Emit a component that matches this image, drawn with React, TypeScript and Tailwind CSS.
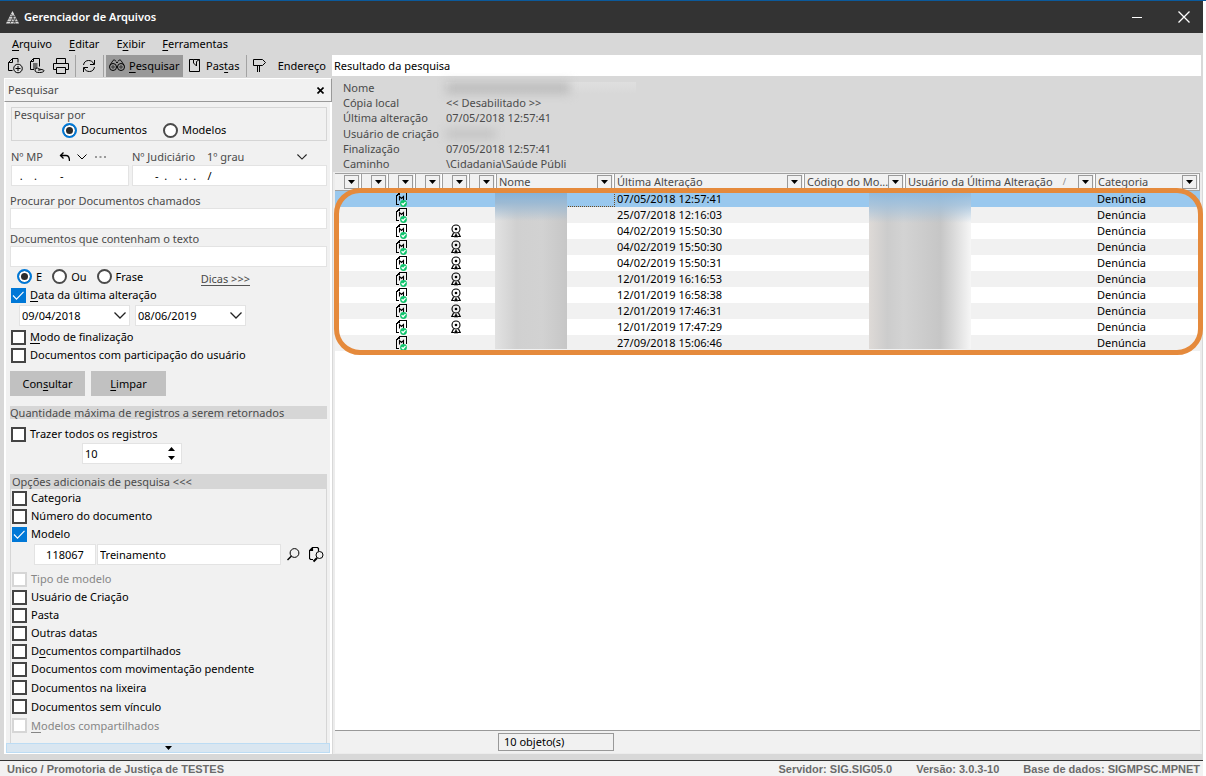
import type { ReactNode } from 'react';

type Option = { id: string; label: string; hotkey?: number; checked?: boolean; disabled?: boolean };

const menus = [
    { label: 'Arquivo', hotkey: 0 },
    { label: 'Editar', hotkey: 0 },
    { label: 'Exibir', hotkey: 1 },
    { label: 'Ferramentas', hotkey: 0 },
];

const details = [
    { label: 'Nome', value: '', hidden: 'name' },
    { label: 'Cópia local', value: '<< Desabilitado >>' },
    { label: 'Última alteração', value: '07/05/2018 12:57:41' },
    { label: 'Usuário de criação', value: '', hidden: 'user' },
    { label: 'Finalização', value: '07/05/2018 12:57:41' },
    { label: 'Caminho', value: '\\Cidadania\\Saúde Públi' },
];

const mainOptions: Option[] = [
    { id: 'categoria', label: 'Categoria' },
    { id: 'numero', label: 'Número do documento' },
    { id: 'modelo', label: 'Modelo', checked: true },
];

const extraOptions: Option[] = [
    { id: 'tipo', label: 'Tipo de modelo', disabled: true },
    { id: 'usuario', label: 'Usuário de Criação' },
    { id: 'pasta', label: 'Pasta' },
    { id: 'datas', label: 'Outras datas' },
    { id: 'compartilhados', label: 'Documentos compartilhados', hotkey: 1 },
    { id: 'movimentacao', label: 'Documentos com movimentação pendente' },
];

const lastOptions: Option[] = [
    { id: 'lixeira', label: 'Documentos na lixeira' },
    { id: 'vinculo', label: 'Documentos sem vínculo' },
    { id: 'modelos-comp', label: 'Modelos compartilhados', hotkey: 0, disabled: true },
];

const rows = [
    { date: '07/05/2018 12:57:41', signed: false },
    { date: '25/07/2018 12:16:03', signed: false },
    { date: '04/02/2019 15:50:30', signed: true },
    { date: '04/02/2019 15:50:30', signed: true },
    { date: '04/02/2019 15:50:31', signed: true },
    { date: '12/01/2019 16:16:53', signed: true },
    { date: '12/01/2019 16:58:38', signed: true },
    { date: '12/01/2019 17:46:31', signed: true },
    { date: '12/01/2019 17:47:29', signed: true },
    { date: '27/09/2018 15:06:46', signed: false },
];

const columns = ['', '', '', '', '', '', 'Nome', 'Última Alteração', 'Código do Mo...', 'Usuário da Última Alteração', 'Categoria'];

const field = 'h-[21px] min-w-0 border border-[#e3e3e3] bg-white px-1 text-black outline-none';

function rowColor(i: number) {
    if (i === 0) return 'bg-[#99c8ee]';
    return i % 2 ? 'bg-[#f1f1f1]' : 'bg-white';
}

function Hotkey({ text, at }: { text: string; at?: number }) {
    if (at === undefined) return <>{text}</>;
    return (
        <span>
            {text.slice(0, at)}
            <u className="underline-offset-2">{text[at]}</u>
            {text.slice(at + 1)}
        </span>
    );
}

function Icon({ w, h, children }: { w: number; h: number; children: ReactNode }) {
    return (
        <svg width={w} height={h} viewBox={`0 0 ${w} ${h}`} fill="none" stroke="currentColor" className="shrink-0" aria-hidden="true">
            {children}
        </svg>
    );
}

function Chevron({ w }: { w: number }) {
    return (
        <svg width={w} height={w / 2 + 1} viewBox="0 0 12 7" fill="none" stroke="#222" strokeWidth="1.3" className="pointer-events-none col-start-1 row-start-1 mr-1 self-center justify-self-end" aria-hidden="true">
            <path d="M.5.5 6 6 11.5.5" />
        </svg>
    );
}

function Triangle({ up }: { up?: boolean }) {
    return (
        <svg width="7" height="4" viewBox="0 0 7 4" aria-hidden="true">
            <path d={up ? 'M0 4h7L3.5 0z' : 'M0 0h7L3.5 4z'} fill="#000" />
        </svg>
    );
}

function Check({ option, className = 'h-[18px]' }: { option: Option; className?: string }) {
    return (
        <label htmlFor={option.id} className={`flex items-center gap-1 ${option.disabled ? 'text-[#868686]' : 'text-black'} ${className}`}>
            <span className="grid">
                <input
                    id={option.id}
                    type="checkbox"
                    defaultChecked={option.checked}
                    disabled={option.disabled}
                    className="peer col-start-1 row-start-1 size-[15px] appearance-none border-2 border-[#444] bg-white checked:border-[#0078d7] checked:bg-[#0078d7] disabled:border-[#d6d6d6]"
                />
                <svg viewBox="0 0 15 15" className="pointer-events-none invisible col-start-1 row-start-1 size-[15px] peer-checked:visible" fill="none" stroke="#fff" strokeWidth="1.1">
                    <path d="m2 7.5 3.5 3.7 7-7.4" />
                </svg>
            </span>
            <Hotkey text={option.label} at={option.hotkey} />
        </label>
    );
}

function Radio({ name, label, checked }: { name: string; label: string; checked?: boolean }) {
    return (
        <label className="flex items-center gap-1 text-black">
            <input
                type="radio"
                name={name}
                defaultChecked={checked}
                className="size-[15px] appearance-none rounded-full border-2 border-[#4a4a4a] bg-white checked:border-[#0078d7] checked:bg-[#2b2b2b] checked:shadow-[inset_0_0_0_2px_#fff]"
            />
            {label}
        </label>
    );
}

function DateSelect({ label, value }: { label: string; value: string }) {
    return (
        <span className="grid w-[111px]">
            <select aria-label={label} className={`col-start-1 row-start-1 appearance-none ${field} px-[2px]`}>
                <option>{value}</option>
            </select>
            <Chevron w={12} />
        </span>
    );
}

function Separator() {
    return <span className="h-[22px] w-px bg-[#a3a3a3]" />;
}

function TitleBar() {
    return (
        <header className="flex h-8 items-center gap-[5px] bg-[#333] pl-[6px] text-white">
            <svg width="13" height="13" viewBox="0 0 13 13" aria-hidden="true">
                <path d="M6.5 0 13 12.5H0z" fill="#ddd" />
                <path d="M3.6 5.6h6M2.2 8h9M1 10.4h11M8.6 3 4 12.5M10.5 6 7.5 12.5M5.5 3 9.5 12.5" stroke="#333" strokeWidth=".7" />
            </svg>
            <h1 className="flex-1 text-[11px] font-semibold">Gerenciador de Arquivos</h1>
            <button type="button" aria-label="Minimizar" className="flex h-8 w-[46px] items-center justify-center">
                <Icon w={10} h={2}><path d="M0 1.5h10" strokeWidth="1" shapeRendering="crispEdges" /></Icon>
            </button>
            <button type="button" aria-label="Fechar" className="flex h-8 w-[38px] items-center justify-center">
                <Icon w={12} h={12}><path d="m.5.5 11 11m0-11-11 11" strokeWidth="1.3" /></Icon>
            </button>
        </header>
    );
}

function Toolbar() {
    return (
        <div className="flex h-[23px] items-center pr-[2px] text-black">
            <div className="flex w-[332px] shrink-0 items-center pl-2">
                <button type="button" aria-label="Novo">
                    <Icon w={15} h={16}>
                        <path d="M4.5 12.500h-4v-8l4-4h5.500v4M.5 4.500h4v-4" />
                        <circle cx="10" cy="10.500" r="4.300" />
                        <path d="M10 8v5M7.500 10.500h5" />
                    </Icon>
                </button>
                <button type="button" aria-label="Novo por modelo" className="ml-[7px]">
                    <Icon w={16} h={16}>
                        <path d="M4 11.500H.5v-8l3-3h6v8M.5 3.500h3v-3M3 6h4.500M3 8h4.500M3 10h4" />
                        <path d="M5 12c.5-2.500 3-2.500 4-1l4.500 1c1.500 1.500-1 2.500-4 2.500S5 14 5 12zm3 0h2.500" />
                    </Icon>
                </button>
                <button type="button" aria-label="Imprimir" className="ml-[7px]">
                    <Icon w={16} h={16}>
                        <path d="M3.500 5.500v-5h9v5M3.500 11.500h-3v-6h15v6h-3M3.500 9.500h9v6h-9z" />
                    </Icon>
                </button>
                <span className="ml-[6px] mr-[6px] flex"><Separator /></span>
                <button type="button" aria-label="Atualizar">
                    <Icon w={14} h={14}>
                        <path d="M1.500 6c.5-3 2.500-4.500 5-4.500S10.500 2.500 12 5M12.500 1v4.500H8M12.500 8c-.5 3-2.500 4.500-5 4.500S3.500 11.500 2 9M1.500 13V8.500H6" />
                    </Icon>
                </button>
                <span className="ml-[7px] mr-[2px] flex"><Separator /></span>
                <button type="button" className="flex h-[22px] w-[77px] shrink-0 items-center gap-1 bg-[#999] pl-[3px]">
                    <Icon w={16} h={13}>
                        <circle cx="4" cy="8" r="3.500" />
                        <circle cx="12" cy="8" r="3.500" />
                        <circle cx="4" cy="8" r="1.200" strokeWidth=".7" />
                        <circle cx="12" cy="8" r="1.200" strokeWidth=".7" />
                        <path d="M.8 6.500 4 1.500c1-1 2.500-.5 3 1M15.200 6.500 12 1.500c-1-1-2.500-.5-3 1M7 3.500h2M7.500 8h1" strokeWidth=".9" />
                    </Icon>
                    <Hotkey text="Pesquisar" at={0} />
                </button>
                <button type="button" className="ml-[6px] flex items-center gap-[5px]">
                    <Icon w={12} h={14}>
                        <path d="M4.500.5h-4v12h10V.5h-6v3.500l3 3V2.500l3-2" />
                    </Icon>
                    <Hotkey text="Pastas" at={3} />
                </button>
                <span className="ml-[6px] mr-[6px] flex"><Separator /></span>
                <button type="button" aria-label="Ir para">
                    <Icon w={14} h={15}>
                        <path d="M.5 1.500h9l3 3-3 3h-9zM4.500 7.500v6.500M6.500 7.500v6.500" />
                    </Icon>
                </button>
                <label htmlFor="endereco" className="ml-auto mr-[6px]">Endereço</label>
            </div>
            <input id="endereco" defaultValue="Resultado da pesquisa" className="h-[21px] min-w-0 flex-1 bg-white px-[2px] outline-none" />
        </div>
    );
}

function SearchPanel() {
    return (
        <aside className="ml-1 mt-px flex w-[328px] shrink-0 flex-col">
            <div className="flex h-6 items-center justify-between border border-b-[#999] border-l-white border-r-[#999] border-t-white bg-[#f1f1f1] pl-[3px] pr-[7px]">
                <h2>Pesquisar</h2>
                <button type="button" aria-label="Fechar painel" className="text-black">
                    <Icon w={7} h={7}><path d="m.5.5 6 6m0-6-6 6" strokeWidth="1.600" /></Icon>
                </button>
            </div>
            <form className="flex flex-1 flex-col border-x-2 border-b border-white bg-[#f1f1f1]">
                <div className="flex flex-1 flex-col pl-1 pr-[3px] pt-[5px]">
                    <fieldset className="ml-px h-[34px] border border-[#d5d5d5] pl-[2px]">
                        <legend className="float-left w-full leading-[14px]">Pesquisar por</legend>
                        <div className="flex items-center gap-4 pl-12">
                            <Radio name="tipo" label="Documentos" checked />
                            <Radio name="tipo" label="Modelos" />
                        </div>
                    </fieldset>

                    <div className="ml-px mt-2 flex gap-[3px]">
                        <div className="flex w-[118px] flex-col">
                            <div className="flex h-4 items-center">
                                <label htmlFor="mp" className="w-12">Nº MP</label>
                                <button type="button" aria-label="Desfazer" className="text-black">
                                    <Icon w={11} h={10}><path d="M1 3.500h6c3 0 3.500 2 3.500 5.500M4.500.5 1.500 3.500l3 3" strokeWidth="1.300" /></Icon>
                                </button>
                                <button type="button" aria-label="Anteriores" className="ml-[7px] text-black">
                                    <Icon w={10} h={6}><path d="m.5.5 4.500 4.500L9.500.5" /></Icon>
                                </button>
                                <button type="button" aria-label="Mais" className="ml-2 text-[#999]">
                                    <Icon w={11} h={2}><path d="M0 1h2m2.500 0h2M9 1h2" strokeWidth="2" /></Icon>
                                </button>
                            </div>
                            <input id="mp" defaultValue="  .    .        -" className={`${field} px-[2px]`} />
                        </div>
                        <div className="flex min-w-0 flex-1 flex-col">
                            <div className="flex h-4 items-center">
                                <label htmlFor="judiciario" className="w-[75px]">Nº Judiciário</label>
                                <span className="grid flex-1 pr-4">
                                    <select aria-label="Grau" className="col-start-1 row-start-1 appearance-none outline-none">
                                        <option>1º grau</option>
                                    </select>
                                    <Chevron w={10} />
                                </span>
                            </div>
                            <input id="judiciario" defaultValue="       -  .    . .  .    /" className={`${field} px-[2px]`} />
                        </div>
                    </div>

                    <label htmlFor="nome" className="mt-2 leading-[14px]">Procurar por Documentos chamados</label>
                    <input id="nome" className={field} />
                    <label htmlFor="texto" className="mt-[3px] leading-[14px]">Documentos que contenham o texto</label>
                    <input id="texto" className={field} />

                    <div className="flex h-[19px] items-center pl-[7px]">
                        <div className="flex gap-[10px]">
                            <Radio name="modo" label="E" checked />
                            <Radio name="modo" label="Ou" />
                            <Radio name="modo" label="Frase" />
                        </div>
                        <a href="#dicas" className="ml-auto mr-[77px] self-end border-b border-[#555] leading-[13px]">Dicas &gt;&gt;&gt;</a>
                    </div>

                    <div className="pl-px">
                        <Check option={{ id: 'data', label: 'Data da última alteração', hotkey: 0, checked: true }} />
                        <div className="mb-[2px] mt-px flex gap-[5px] pl-2">
                            <DateSelect label="Data inicial" value="09/04/2018" />
                            <DateSelect label="Data final" value="08/06/2019" />
                        </div>
                        <Check option={{ id: 'finalizacao', label: 'Modo de finalização', hotkey: 0 }} />
                        <Check option={{ id: 'participacao', label: 'Documentos com participação do usuário' }} />
                    </div>

                    <div className="mt-[7px] flex gap-[6px] text-black">
                        <button type="button" className="h-[25px] w-[75px] bg-[#c1c1c1]"><Hotkey text="Consultar" at={3} /></button>
                        <button type="button" className="h-[25px] w-[75px] bg-[#c1c1c1]"><Hotkey text="Limpar" at={0} /></button>
                    </div>

                    <h3 className="mt-[10px] bg-[#d6d6d6] leading-[13px]">Quantidade máxima de registros a serem retornados</h3>
                    <div className="mt-[6px] pl-px">
                        <Check option={{ id: 'todos', label: 'Trazer todos os registros' }} />
                        <div className="ml-[71px] flex h-[21px] w-[100px] items-center border border-[#e3e3e3] bg-white pr-[6px]">
                            <input aria-label="Quantidade máxima de registros" defaultValue="10" className="min-w-0 flex-1 px-[2px] text-black outline-none" />
                            <span className="flex flex-col gap-[5px]">
                                <button type="button" aria-label="Aumentar" className="flex"><Triangle up /></button>
                                <button type="button" aria-label="Diminuir" className="flex"><Triangle /></button>
                            </span>
                        </div>
                    </div>

                    <section className="mt-[10px] flex-1 border-x border-[#d6d6d6]">
                        <h3 className="bg-[#d6d6d6] pl-px leading-[15px]">Opções adicionais de pesquisa &lt;&lt;&lt;</h3>
                        <div className="pl-px">
                            {mainOptions.map((o) => <Check key={o.id} option={o} />)}
                            <div className="mb-[5px] mt-px flex items-center pl-[22px] text-black">
                                <input aria-label="Código do modelo" defaultValue="118067" className={`${field} w-[62px] text-center`} />
                                <input aria-label="Nome do modelo" defaultValue="Treinamento" className={`${field} ml-px flex-1 px-[2px]`} />
                                <button type="button" aria-label="Buscar modelo" className="ml-[6px]">
                                    <Icon w={13} h={13}>
                                        <circle cx="7.500" cy="5" r="4.400" />
                                        <path d="m4.500 8-4 4" strokeWidth="1.500" />
                                    </Icon>
                                </button>
                                <button type="button" aria-label="Abrir modelo" className="ml-[9px] mr-[2px]">
                                    <Icon w={15} h={16}>
                                        <path d="M4 12.500H1.500l-1-1v-8l3-3h5l1 1v3M.5 3.500h3v-3" strokeWidth="1.200" />
                                        <circle cx="10.500" cy="8" r="3.500" />
                                        <path d="m8 11-3.500 3.500" strokeWidth="2" />
                                    </Icon>
                                </button>
                            </div>
                            {extraOptions.map((o) => <Check key={o.id} option={o} />)}
                            {lastOptions.map((o) => <Check key={o.id} option={o} className="h-[19px]" />)}
                        </div>
                    </section>
                </div>
                <button type="button" aria-label="Mostrar mais" className="flex h-[10px] items-center justify-center border border-[#bcdcf4] bg-[#d9e6f1]">
                    <Triangle />
                </button>
            </form>
        </aside>
    );
}

function ModelIcon() {
    return (
        <svg width="12" height="16" viewBox="0 0 12 16" fill="none" className="ml-[7px] block" aria-hidden="true">
            <path d="M10.500 9V1.500H3.500v1h-1v1h-1v1h-1v9H3M3.500 4V2" stroke="#000" strokeWidth="1" shapeRendering="crispEdges" />
            <path d="M3.500 9.500v-4l2 2 2-2v4" stroke="#000" strokeWidth="1.100" />
            <circle cx="7.500" cy="12.500" r="3.400" fill="#0fc46c" />
            <path d="m5.600 12.300 1.500 1.500 2.400-2.700" stroke="#fff" strokeWidth="1.300" />
        </svg>
    );
}

function SignedIcon() {
    return (
        <svg width="10" height="14" viewBox="0 0 10 14" fill="none" stroke="#000" className="ml-2 block" aria-hidden="true">
            <circle cx="5" cy="5" r="4" strokeWidth="1.100" />
            <circle cx="5" cy="5" r="1.300" fill="#000" stroke="none" />
            <path d="M2.500 9 .8 12.500H3M7.500 9l1.700 3.500H7" strokeWidth="1.200" />
            <path d="m3 13 2-3 2 3z" fill="#000" strokeWidth=".6" />
        </svg>
    );
}

function Results() {
    return (
        <div className="relative">
            <table className="w-full table-fixed border-separate border-spacing-0 text-black">
                <colgroup>
                    {columns.slice(0, 6).map((_, i) => <col key={i} className="w-[27px]" />)}
                    <col className="w-[118px]" />
                    <col className="w-[190px]" />
                    <col className="w-[101px]" />
                    <col className="w-[190px]" />
                    <col />
                </colgroup>
                <thead>
                    <tr>
                        {columns.map((name, i) => (
                            <th key={i} scope="col" className="h-[18px] border-y border-r border-[#a0a0a0] bg-[#f1f1f1] p-0 font-normal text-[#4a4a4a]">
                                <div className="flex h-4 items-center border-r border-white pl-[2px] pr-px">
                                    <span className="min-w-0 flex-1 overflow-hidden whitespace-nowrap text-left">{name}</span>
                                    {i === 9 && <span className="mr-3 text-[9px] text-[#888]">/</span>}
                                    <button type="button" aria-label={`Filtrar ${name}`} className="flex h-[14px] w-[15px] shrink-0 items-center justify-center border border-[#999]">
                                        <Triangle />
                                    </button>
                                </div>
                            </th>
                        ))}
                    </tr>
                </thead>
                <tbody>
                    {rows.map((row, i) => (
                        <tr key={i} className={`h-4 *:p-0 *:leading-4 ${rowColor(i)}`}>
                            <td />
                            <td />
                            <td><ModelIcon /></td>
                            <td />
                            <td>{row.signed && <SignedIcon />}</td>
                            <td />
                            <td className={i === 0 ? 'border-b border-r border-dotted border-[#6b4a20]' : ''} />
                            <td><span className="pl-[2px]">{row.date}</span></td>
                            <td />
                            <td />
                            <td><span className="pl-px">Denúncia</span></td>
                        </tr>
                    ))}
                </tbody>
            </table>
            {/* hidden names and users */}
            <div className="absolute bottom-[2px] left-[160px] top-5 w-[72px] bg-[linear-gradient(180deg,#86b3d8_0,#9dbad3_10px,#c4ccd400_28px),linear-gradient(90deg,#e2e2e2,#d0d0d0_30%,#d2d2d2_65%,#c6c6c6)]" />
            <div className="absolute bottom-[2px] left-[534px] top-5 w-[102px] bg-[linear-gradient(180deg,#8cb9dfee_0,#9dbfdccc_12px,#c4ccd400_30px),linear-gradient(90deg,#dedad7,#cccccc_18%,#d3d3d3_34%,#c6c6c6_70%,#d8d8d8_82%,#f6f6f6)]" />
            <div className="pointer-events-none absolute -bottom-1 -left-px -right-[3px] top-[15px] rounded-[26px] border-[5px] border-[#e58a3c]" />
        </div>
    );
}

export default function App() {
    return (
        <div className="flex min-h-screen flex-col border-t border-[#0b5a9c] bg-white pr-[3px] font-['Noto_Sans','Segoe_UI',sans-serif] text-[11px] leading-4 text-[#4a4a4a]">
            <TitleBar />
            <div className="flex flex-1 flex-col bg-[#d8d8d8]">
                <nav className="flex h-[21px] items-center gap-[17px] pl-3 text-black">
                    {menus.map((m) => (
                        <button key={m.label} type="button"><Hotkey text={m.label} at={m.hotkey} /></button>
                    ))}
                </nav>
                <Toolbar />
                <main className="flex flex-1 pb-[6px]">
                    <SearchPanel />
                    <div className="flex min-w-0 flex-1 flex-col pl-px pr-px">
                        <dl className="grid h-[95px] grid-cols-[103px_1fr] grid-rows-6 items-center pl-[10px] pt-[3px]">
                            {details.map((d) => (
                                <div key={d.label} className="contents">
                                    <dt>{d.label}</dt>
                                    <dd>
                                        {d.value}
                                        {d.hidden === 'name' && (
                                            <span className="block w-[190px] bg-linear-to-b from-[#dfdfdf] to-[#d8d8d8]">
                                                <span className="block h-3 w-[124px] bg-[#bdbdbd] blur-[5px]" />
                                            </span>
                                        )}
                                        {d.hidden === 'user' && <span className="block h-[10px] w-[50px] bg-[#c4c4c4] blur-[5px]" />}
                                    </dd>
                                </div>
                            ))}
                        </dl>
                        <div className="flex flex-1 flex-col border-x-2 border-b border-t border-[#ececec] bg-white">
                            <Results />
                            <div className="mt-auto flex h-[23px] items-center border-t border-[#999] bg-[#f1f1f1]">
                                <output className="ml-[163px] w-[116px] border border-[#999] pl-[5px] text-black">10 objeto(s)</output>
                            </div>
                        </div>
                    </div>
                </main>
            </div>
            <footer className="flex h-4 items-center gap-6 border-t border-[#333] bg-[#f2f2f2] pl-[7px] pr-[3px] font-['Liberation_Sans',Arial,sans-serif] text-[11px] font-bold text-[#6b6b6b]">
                <span className="flex-1">Unico / Promotoria de Justiça de TESTES</span>
                <span>Servidor: SIG.SIG05.0</span>
                <span>Versão: 3.0.3-10</span>
                <span>Base de dados: SIGMPSC.MPNET</span>
            </footer>
        </div>
    );
}
